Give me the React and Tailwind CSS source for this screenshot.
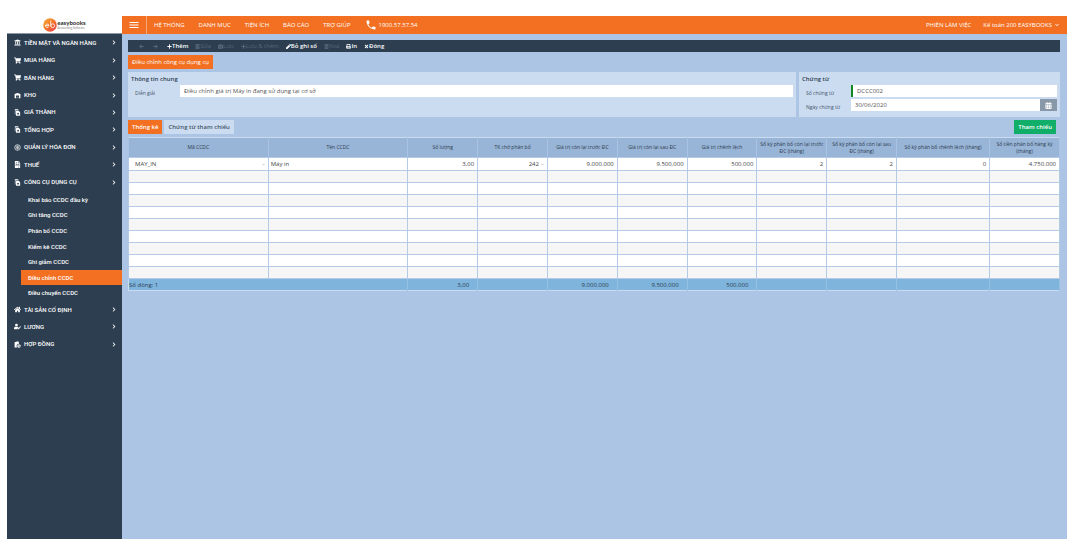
import React, { useState } from 'react';
import {
    FaPlus, FaPen, FaPrint, FaTimes, FaTrashAlt, FaArrowLeft, FaArrowRight, FaChevronRight,
    FaChevronDown, FaCalendarAlt, FaUniversity, FaShoppingCart, FaUserEdit, FaHome, FaFileInvoice, FaCamera, FaBuilding,
} from 'react-icons/fa';
import { MdPhone, MdWarehouse, MdMenu } from 'react-icons/md';

const CoinIcon = (props) => (
    <svg viewBox="0 0 24 24" fill="none" stroke="currentColor" strokeWidth="2.4" {...props}>
        <circle cx="12" cy="12" r="9.5" />
        <path d="M12 5v14M8 8v8M16 8v8" />
    </svg>
);

const SheetsIcon = (props) => (
    <svg viewBox="0 0 24 24" fill="currentColor" {...props}>
        <path d="M3 1h11l2 3H5v15H3z" />
        <path fillRule="evenodd" d="M7 6h9l5 5v12H7zM14 13a3 3 0 1 0 0 6 3 3 0 0 0 0-6z" />
    </svg>
);

const ContractIcon = (props) => (
    <svg viewBox="0 0 24 24" fill="currentColor" {...props}>
        <path d="M2 4l12-3 3 4v5a7 7 0 0 0-6 12H2z" />
        <path fillRule="evenodd" d="M17 11a6 6 0 1 0 0 12 6 6 0 0 0 0-12zm-1 2h2v4h3v2h-5z" />
    </svg>
);

const Logo = () => (
    <svg viewBox="0 0 28 28" className="w-3.5 h-3.5 shrink-0">
        <defs>
            <linearGradient id="logoFill" x1="0" y1="0" x2="1" y2="1">
                <stop offset="0" stopColor="#f9b233" />
                <stop offset="0.5" stopColor="#f3732a" />
                <stop offset="1" stopColor="#e8384f" />
            </linearGradient>
        </defs>
        <circle cx="14" cy="14" r="13.500" fill="url(#logoFill)" />
        <path d="M5 15h7a3.500 3.500 0 1 0-1.500 3.500M15.500 6v9.500a3.800 3.800 0 1 0 3.800-3.800c-2 0-3.800 1.500-3.800 3.800" fill="none" stroke="#fff" strokeWidth="1.6" strokeLinecap="round" />
    </svg>
);

const mainMenu = [
    { label: 'TIỀN MẶT VÀ NGÂN HÀNG', icon: FaUniversity },
    { label: 'MUA HÀNG', icon: FaShoppingCart },
    { label: 'BÁN HÀNG', icon: FaShoppingCart },
    { label: 'KHO', icon: MdWarehouse },
    { label: 'GIÁ THÀNH', icon: SheetsIcon },
    { label: 'TỔNG HỢP', icon: SheetsIcon },
    { label: 'QUẢN LÝ HÓA ĐƠN', icon: CoinIcon },
    { label: 'THUẾ', icon: FaFileInvoice },
    { label: 'CÔNG CỤ DỤNG CỤ', icon: SheetsIcon },
];

const toolMenu = [
    'Khai báo CCDC đầu kỳ', 'Ghi tăng CCDC', 'Phân bổ CCDC', 'Kiểm kê CCDC',
    'Ghi giảm CCDC', 'Điều chỉnh CCDC', 'Điều chuyển CCDC',
];

const lowerMenu = [
    { label: 'TÀI SẢN CỐ ĐỊNH', icon: FaHome },
    { label: 'LƯƠNG', icon: FaUserEdit },
    { label: 'HỢP ĐỒNG', icon: ContractIcon },
];

const topLinks = ['HỆ THỐNG', 'DANH MỤC', 'TIỆN ÍCH', 'BÁO CÁO', 'TRỢ GIÚP'];

const toolbar = [
    { label: 'Thêm', icon: FaPlus, enabled: true },
    { label: 'Sửa', icon: FaBuilding },
    { label: 'Lưu', icon: FaCamera },
    { label: 'Lưu & thêm', icon: FaPlus },
    { label: 'Bỏ ghi sổ', icon: FaPen, enabled: true },
    { label: 'Xoá', icon: FaTrashAlt },
    { label: 'In', icon: FaPrint, enabled: true },
    { label: 'Đóng', icon: FaTimes, enabled: true },
];

const columns = [
    { title: 'Mã CCDC', width: 'w-[15%]' },
    { title: 'Tên CCDC', width: 'w-[15%]' },
    { title: 'Số lượng', width: 'w-[7.5%]', total: '3,00' },
    { title: 'TK chờ phân bổ', width: 'w-[7.5%]' },
    { title: 'Giá trị còn lại trước ĐC', width: 'w-[7.5%]', total: '9.000.000' },
    { title: 'Giá trị còn lại sau ĐC', width: 'w-[7.5%]', total: '9.500.000' },
    { title: 'Giá trị chênh lệch', width: 'w-[7.5%]', total: '500.000' },
    { title: 'Số kỳ phân bổ còn lại trước ĐC (tháng)', width: 'w-[7.5%]' },
    { title: 'Số kỳ phân bổ còn lại sau ĐC (tháng)', width: 'w-[7.5%]' },
    { title: 'Số kỳ phân bổ chênh lệch (tháng)', width: 'w-[10%]' },
    { title: 'Số tiền phân bổ hàng kỳ (tháng)', width: 'w-[7.5%]' },
];

const MenuList = ({ items, className }) => (
    <ul className={`flex flex-col ${className}`}>
        {items.map(({ label, icon: Icon }) => (
            <li key={label} className="flex-1 flex">
                <a href="#" className="flex flex-1 items-center gap-[3px] pl-[7px] pr-1.5">
                    <Icon className="w-[7px] h-[7px]" />
                    <span className="flex-1">{label}</span>
                    <FaChevronRight className="w-1 h-[5px]" />
                </a>
            </li>
        ))}
    </ul>
);

const Sidebar = () => (
    <aside className="w-[115px] shrink-0 bg-[#2d3e50] text-white font-[Roboto] font-medium text-[6px] leading-2">
        <div className="h-[18px] bg-white flex items-center justify-center border-b border-[#8d98a3]">
            <Logo />
            <div className="text-[#3a3a3a] font-[Lato]">
                <p className="font-black text-[6px] leading-[7px]">easybooks</p>
                <p className="font-normal text-[3px] leading-1 text-[#888]">Accounting Software</p>
            </div>
        </div>
        <MenuList items={mainMenu} className="h-[157px]" />
        <ul className="h-[110px] flex flex-col pt-px pl-3.5">
            {toolMenu.map((item) => (
                <li key={item} className="flex-1 flex">
                    <a href="#" className={`flex flex-1 items-center pl-[7px] ${item === 'Điều chỉnh CCDC' ? 'bg-[#f37022]' : ''}`}>{item}</a>
                </li>
            ))}
        </ul>
        <MenuList items={lowerMenu} className="h-[52px]" />
    </aside>
);

const TopBar = () => (
    <header className="h-[18px] flex items-center bg-[#f37022] text-white text-[6px] font-medium">
        <button className="w-[25px] h-full flex items-center justify-center border-r border-[#f9a877]" aria-label="Menu">
            <MdMenu className="w-3 h-3" />
        </button>
        <nav className="flex items-center gap-3.5 pl-[7px]">
            {topLinks.map((link) => <a key={link} href="#">{link}</a>)}
            <a href="tel:1900575754" className="flex items-center gap-0.5">
                <MdPhone className="w-3 h-3" />
                1900.57.57.54
            </a>
        </nav>
        <div className="ml-auto flex items-center gap-3 pr-2">
            <a href="#">PHIÊN LÀM VIỆC</a>
            <button className="flex items-center gap-[3px]">
                Kế toán 200 EASYBOOKS <FaChevronDown className="w-1 h-1" />
            </button>
        </div>
    </header>
);

const Toolbar = () => (
    <div className="h-3 flex items-center gap-[7px] pl-[11px] bg-[#2d3e50] text-[6px] leading-2">
        <button disabled aria-label="Trước" className="text-[#56687a] mr-0.5"><FaArrowLeft className="w-[5px] h-[5px]" /></button>
        <button disabled aria-label="Sau" className="text-[#56687a] mr-0.5"><FaArrowRight className="w-[5px] h-[5px]" /></button>
        {toolbar.map(({ label, icon: Icon, enabled }) => (
            <button key={label} disabled={!enabled} className={`flex items-center ${enabled ? 'font-semibold text-white' : 'text-[#56687a]'}`}>
                <Icon className="w-[5px] h-[5px]" />{label}
            </button>
        ))}
    </div>
);

const GeneralInfo = () => (
    <div className="flex gap-[3px] mt-[3px] text-[#44546a]">
        <section className="flex-1 bg-[#cbdcf0] px-[3px] pt-[3px] pb-5">
            <h2 className="text-[6px] leading-2 font-semibold text-[#2d3e50]">Thông tin chung</h2>
            <div className="flex items-center mt-0.5">
                <label htmlFor="description" className="w-[49px] pl-1 pt-1 text-[5px] leading-2">Diễn giải</label>
                <input id="description" defaultValue="Điều chỉnh giá trị Máy in đang sử dụng tại cơ sở" className="flex-1 min-w-0 h-3 px-1 bg-white text-[6px] text-[#555]" />
            </div>
        </section>
        <section className="w-[261px] bg-[#cbdcf0] px-[3px] pt-[3px]">
            <h2 className="text-[6px] leading-2 font-semibold text-[#2d3e50]">Chứng từ</h2>
            <div className="flex items-center mt-0.5">
                <label htmlFor="voucherNo" className="w-[49px] pl-1 pt-1 text-[5px] leading-2">Số chứng từ</label>
                <input id="voucherNo" defaultValue="DCCC002" className="flex-1 min-w-0 h-3 px-1 border-l-2 border-[#108a20] bg-white text-[6px] text-[#555]" />
            </div>
            <div className="flex items-center mt-0.5">
                <label htmlFor="voucherDate" className="w-[49px] pl-1 pt-1 text-[5px] leading-2">Ngày chứng từ</label>
                <input id="voucherDate" defaultValue="30/06/2020" className="flex-1 min-w-0 h-3 px-1 bg-white text-[6px] text-[#555]" />
                <button aria-label="Chọn ngày" className="w-[17px] h-3 flex items-center justify-center bg-[#8998a8] text-white">
                    <FaCalendarAlt className="w-[7px] h-[7px]" />
                </button>
            </div>
        </section>
    </div>
);

const DetailTable = () => (
    <table className="w-full table-fixed border-collapse border border-[#cbdcf0] text-[6px] leading-2 text-[#444]">
        <thead>
            <tr className="h-5 bg-[#98b4d6] text-[#2d3e50]">
                {columns.map((col) => (
                    <th key={col.title} className={`${col.width} px-0.5 border-x border-[#a9c3e2] font-normal text-[5px] leading-[7px]`}>{col.title}</th>
                ))}
            </tr>
        </thead>
        <tbody>
            <tr className="h-[13px] bg-white text-right">
                <td className="border border-[#b4cae6] pl-1.5 pr-[3px]">
                    <div className="flex items-center">
                        <select aria-label="Mã CCDC" className="flex-1 appearance-none h-2"><option>MAY_IN</option></select>
                        <FaChevronDown className="w-[3px] h-[3px] text-[#aaa]" />
                    </div>
                </td>
                <td className="border border-[#b4cae6] px-0.5 text-left">Máy in</td>
                <td className="border border-[#b4cae6] px-[3px]">3,00</td>
                <td className="border border-[#b4cae6] px-[3px]">
                    <div className="flex items-center gap-0.5">
                        <select aria-label="TK chờ phân bổ" className="flex-1 appearance-none h-2 text-right"><option>242</option></select>
                        <FaChevronDown className="w-[3px] h-[3px] text-[#aaa]" />
                    </div>
                </td>
                {['9.000.000', '9.500.000', '500.000', '2', '2', '0', '4.750.000'].map((value, i) => (
                    <td key={i} className="border border-[#b4cae6] px-[3px]">{value}</td>
                ))}
            </tr>
            {Array.from({ length: 9 }, (_, row) => (
                <tr key={row} className="h-3 odd:bg-white even:bg-[#f6f6f6]">
                    {columns.map((col) => <td key={col.title} className="border border-[#b4cae6]"></td>)}
                </tr>
            ))}
        </tbody>
        <tfoot>
            <tr className="h-3 bg-[#7fb4dc] text-[#2d3e50]">
                <td colSpan={2}>Số dòng: 1</td>
                {columns.slice(2).map((col) => (
                    <td key={col.title} className="border-x border-[#94c0e2] pr-2 text-right">{col.total}</td>
                ))}
            </tr>
        </tfoot>
    </table>
);

const App = () => {
    const [tab, setTab] = useState('Thống kê');

    return (
        <div className="min-h-screen flex bg-white pt-4 pb-[6px] pl-[7px] pr-[11px] font-['Open_Sans',sans-serif]">
            <Sidebar />
            <div className="flex-1 min-w-0 bg-[#acc5e5]">
                <TopBar />
                <main className="pl-1.5 pr-[7px] pt-1.5">
                    <Toolbar />
                    <h1 className="w-fit mt-[3px] h-3.5 px-1 flex items-center bg-[#f37022] text-white text-[6px]">Điều chỉnh công cụ dụng cụ</h1>
                    <GeneralInfo />
                    <div className="flex items-center gap-0.5 mt-[3px] mb-[3px] text-[6px]">
                        {['Thống kê', 'Chứng từ tham chiếu'].map((name) => (
                            <button
                                key={name}
                                onClick={() => setTab(name)}
                                className={`h-3.5 px-1 font-semibold ${tab === name ? 'bg-[#f37022] text-white' : 'bg-[#cbdcf0] text-[#44546a]'}`}
                            >
                                {name}
                            </button>
                        ))}
                        <button className="ml-auto mr-1 h-3.5 px-1 bg-[#10ae68] text-white font-semibold">Tham chiếu</button>
                    </div>
                    <DetailTable />
                </main>
            </div>
        </div>
    );
};

export default App;
